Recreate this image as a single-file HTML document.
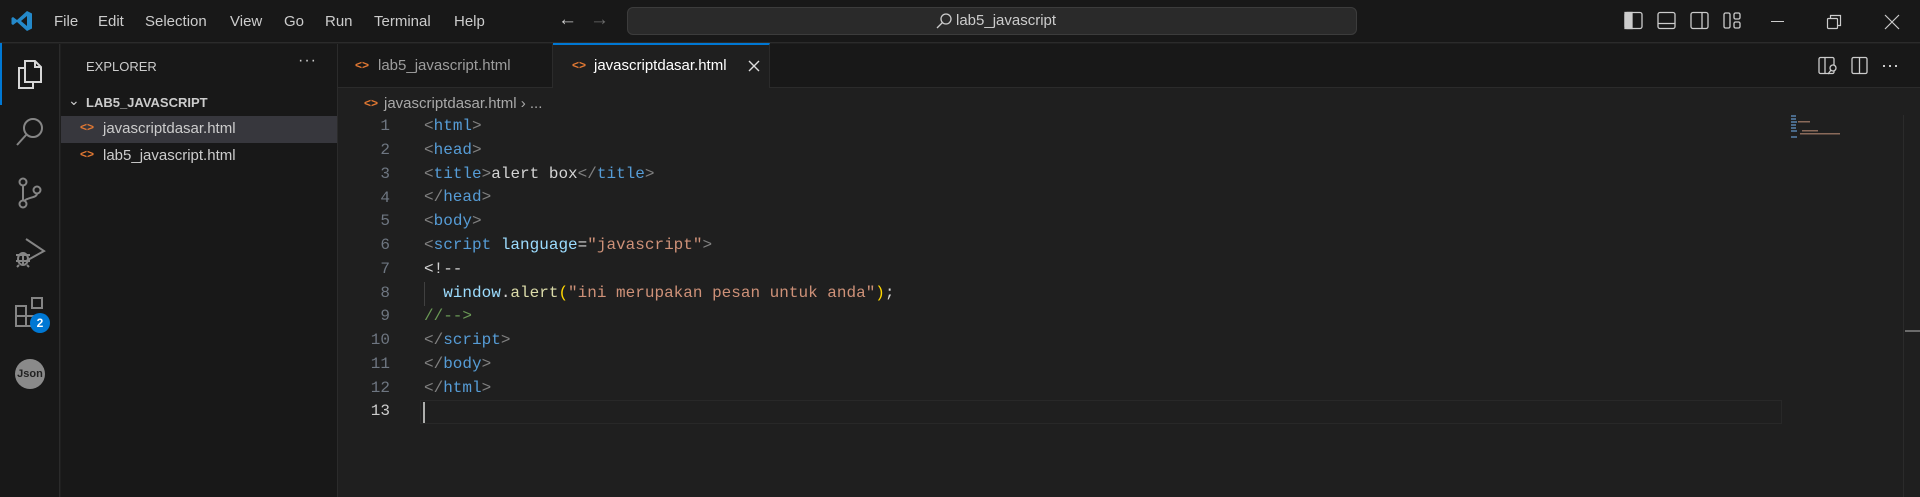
<!DOCTYPE html>
<html><head><meta charset="utf-8"><style>
*{margin:0;padding:0;box-sizing:border-box}
body{width:1920px;height:497px;background:#1f1f1f;position:relative;overflow:hidden;font-family:"Liberation Sans",sans-serif;color:#ccc}
.a{position:absolute}
.menu span{position:absolute;top:13px;font-size:15px;color:#ccc}
.code{font-family:"Liberation Mono",monospace;font-size:16px;white-space:pre;line-height:23.8px}
.t{color:#569cd6}.b{color:#808080}.at{color:#9cdcfe}.s{color:#ce9178}.c{color:#6a9955}.f{color:#dcdcaa}.y{color:#ffd700}
.ln{position:absolute;left:340px;width:50px;text-align:right;color:#6e7681}
</style></head><body>
<div class="a" style="left:0;top:0;width:1920px;height:43px;background:#181818;border-bottom:1px solid #2b2b2b"></div>
<svg class="a" style="left:10px;top:9px" width="24" height="24" viewBox="0 0 24 24"><path d="M17 2 L22 4.5 V19.5 L17 22 L7 13 L3 16 L1.5 15 V9 L3 8 L7 11 Z M17 7 L11 12 L17 17 Z" fill="#2489ca"/></svg>
<div class="menu"><span style="left:54px">File</span><span style="left:98px">Edit</span><span style="left:145px">Selection</span><span style="left:230px">View</span><span style="left:284px">Go</span><span style="left:325px">Run</span><span style="left:374px">Terminal</span><span style="left:454px">Help</span></div>
<div class="a" style="left:558px;top:9px;font-size:19px;color:#ccc">←</div>
<div class="a" style="left:590px;top:9px;font-size:19px;color:#6b6b6b">→</div>
<div class="a" style="left:627px;top:7px;width:730px;height:28px;background:#2a2a2a;border:1px solid #3c3c3c;border-radius:6px"></div>
<svg class="a" style="left:935px;top:12px" width="18" height="18"><circle cx="11" cy="7" r="5" stroke="#ccc" fill="none" stroke-width="1.3"/><path d="M7.5 10.5 L2 16" stroke="#ccc" stroke-width="1.3"/></svg>
<div class="a" style="left:956px;top:12px;font-size:15px;color:#ccc">lab5_javascript</div>
<svg class="a" style="left:1620px;top:11px" width="130" height="20" fill="none" stroke="#ccc" stroke-width="1.3">
<rect x="5" y="1.5" width="17" height="16" rx="2"/><rect x="5" y="1.5" width="7" height="16" fill="#ccc"/>
<rect x="38" y="1.5" width="17" height="16" rx="2"/><path d="M38 12.5H55"/>
<rect x="71" y="1.5" width="17" height="16" rx="2"/><path d="M82 1.5V17.5"/>
<rect x="104" y="2" width="6" height="15" rx="1.5"/><rect x="114" y="2" width="6" height="6" rx="1.5"/><rect x="114" y="11" width="6" height="6" rx="1.5"/></svg>
<div class="a" style="left:1771px;top:21px;width:13px;height:1px;background:#ccc"></div>
<svg class="a" style="left:1826px;top:14px" width="16" height="16" fill="none" stroke="#ccc" stroke-width="1.2"><rect x="1.5" y="4.5" width="10" height="10" rx="1"/><path d="M4.5 4.5V1.5H14.5V11.5H11.5"/></svg>
<svg class="a" style="left:1884px;top:14px" width="16" height="16" stroke="#ccc" stroke-width="1.2"><path d="M1 1L15 15M15 1L1 15"/></svg>
<div class="a" style="left:0;top:44px;width:60px;height:453px;background:#181818;border-right:1px solid #2b2b2b"></div>
<div class="a" style="left:0;top:43px;width:2px;height:62px;background:#0078d4"></div>
<svg class="a" style="left:14px;top:58px" width="32" height="32" fill="none" stroke="#d7d7d7" stroke-width="2"><path d="M11 3H21L27 9V24H11Z"/><path d="M21 3V9H27"/><path d="M11 10H5V30H19V24"/></svg>
<svg class="a" style="left:14px;top:116px" width="32" height="32"><circle cx="19" cy="12" r="9" stroke="#858585" stroke-width="2" fill="none"/><path d="M12.5 18.5L3 29" stroke="#858585" stroke-width="2"/></svg>
<svg class="a" style="left:14px;top:176px" width="32" height="34" fill="none" stroke="#858585" stroke-width="2"><circle cx="9" cy="6" r="3.5"/><circle cx="9" cy="28" r="3.5"/><circle cx="23" cy="14" r="3.5"/><path d="M9 9.5V24.5M23 17.5C23 22 14 21 10 25"/></svg>
<svg class="a" style="left:14px;top:236px" width="34" height="32" fill="none" stroke="#858585" stroke-width="2"><path d="M12 3L30 15L12 25"/><ellipse cx="9" cy="23" rx="5" ry="6"/><path d="M2 19H16M2 25H16M5 29L3 31M13 29L15 31M9 17V29"/></svg>
<svg class="a" style="left:14px;top:296px" width="34" height="34" fill="none" stroke="#858585" stroke-width="2"><rect x="2" y="10" width="10" height="10"/><rect x="2" y="20" width="10" height="10"/><rect x="12" y="20" width="10" height="10"/><rect x="18" y="2" width="10" height="10"/></svg>
<div class="a" style="left:30px;top:313px;width:20px;height:20px;border-radius:50%;background:#0078d4;color:#fff;font-size:12px;font-weight:bold;text-align:center;line-height:20px">2</div>
<div class="a" style="left:15px;top:359px;width:30px;height:30px;border-radius:50%;background:#8a8a8a;color:#222;font-size:11px;font-weight:bold;text-align:center;line-height:30px">Json</div>
<div class="a" style="left:61px;top:44px;width:277px;height:453px;background:#181818;border-right:1px solid #2b2b2b"></div>
<div class="a" style="left:86px;top:59px;font-size:13px;color:#ccc">EXPLORER</div>
<div class="a" style="left:298px;top:52px;font-size:16px;color:#ccc;letter-spacing:1px">···</div>
<div class="a" style="left:68px;top:92px;font-size:14px;color:#ccc">⌄</div>
<div class="a" style="left:86px;top:95px;font-size:13px;font-weight:bold;color:#ccc">LAB5_JAVASCRIPT</div>
<div class="a" style="left:61px;top:116px;width:276px;height:27px;background:#37373d"></div>
<div class="a" style="left:80px;top:120px;font-size:12px;font-weight:bold;color:#e37933">&lt;&gt;</div>
<div class="a" style="left:103px;top:120px;font-size:15px;color:#ccc">javascriptdasar.html</div>
<div class="a" style="left:80px;top:147px;font-size:12px;font-weight:bold;color:#e37933">&lt;&gt;</div>
<div class="a" style="left:103px;top:147px;font-size:15px;color:#ccc">lab5_javascript.html</div>
<div class="a" style="left:338px;top:44px;width:1582px;height:44px;background:#181818;border-bottom:1px solid #2b2b2b"></div>
<div class="a" style="left:338px;top:44px;width:215px;height:44px;border-right:1px solid #2b2b2b"></div>
<div class="a" style="left:355px;top:58px;font-size:12px;font-weight:bold;color:#e37933">&lt;&gt;</div>
<div class="a" style="left:378px;top:57px;font-size:15px;color:#9d9d9d">lab5_javascript.html</div>
<div class="a" style="left:553px;top:43px;width:217px;height:45px;background:#1f1f1f;border-top:2px solid #0078d4;border-right:1px solid #2b2b2b"></div>
<div class="a" style="left:572px;top:58px;font-size:12px;font-weight:bold;color:#e37933">&lt;&gt;</div>
<div class="a" style="left:594px;top:57px;font-size:15px;color:#fff">javascriptdasar.html</div>
<svg class="a" style="left:748px;top:60px" width="12" height="12" stroke="#ddd" stroke-width="1.4"><path d="M1 1L11 11M11 1L1 11"/></svg>
<svg class="a" style="left:1818px;top:56px" width="90" height="20" fill="none" stroke="#ccc" stroke-width="1.3"><rect x="1" y="1.5" width="15" height="16" rx="1.5"/><path d="M7 1.5V17.5"/><circle cx="15" cy="12" r="3" fill="#181818"/><path d="M13 14L10 18"/><rect x="34" y="1.5" width="15" height="16" rx="1.5"/><path d="M41.5 1.5V17.5"/><path d="M65 10h2M71 10h2M77 10h2" stroke-width="2"/></svg>
<div class="a" style="left:364px;top:96px;font-size:12px;font-weight:bold;color:#e37933">&lt;&gt;</div>
<div class="a" style="left:384px;top:95px;font-size:15px;color:#a9a9a9">javascriptdasar.html &#x203A; ...</div>
<div class="a" style="left:420px;top:400px;width:1362px;height:24px;border:1px solid #282828"></div>
<div class="a" style="left:423px;top:402px;width:2px;height:21px;background:#aeafad"></div>
<div class="a" style="left:424px;top:282px;width:1px;height:24px;background:#404040"></div>
<div class="code">
<div class="ln" style="top:115px">1</div><div class="ln" style="top:139px">2</div><div class="ln" style="top:163px">3</div><div class="ln" style="top:187px">4</div><div class="ln" style="top:210px">5</div><div class="ln" style="top:234px">6</div><div class="ln" style="top:258px">7</div><div class="ln" style="top:282px">8</div><div class="ln" style="top:305px">9</div><div class="ln" style="top:329px">10</div><div class="ln" style="top:353px">11</div><div class="ln" style="top:377px">12</div><div class="ln" style="top:400px;color:#ccc">13</div>
<div class="a" style="left:424px;top:115px;color:#d4d4d4"><span class="b">&lt;</span><span class="t">html</span><span class="b">&gt;</span>
<span class="b">&lt;</span><span class="t">head</span><span class="b">&gt;</span>
<span class="b">&lt;</span><span class="t">title</span><span class="b">&gt;</span>alert box<span class="b">&lt;/</span><span class="t">title</span><span class="b">&gt;</span>
<span class="b">&lt;/</span><span class="t">head</span><span class="b">&gt;</span>
<span class="b">&lt;</span><span class="t">body</span><span class="b">&gt;</span>
<span class="b">&lt;</span><span class="t">script</span> <span class="at">language</span>=<span class="s">"javascript"</span><span class="b">&gt;</span>
&lt;!--
  <span class="at">window</span>.<span class="f">alert</span><span class="y">(</span><span class="s">"ini merupakan pesan untuk anda"</span><span class="y">)</span>;
<span class="c">//--&gt;</span>
<span class="b">&lt;/</span><span class="t">script</span><span class="b">&gt;</span>
<span class="b">&lt;/</span><span class="t">body</span><span class="b">&gt;</span>
<span class="b">&lt;/</span><span class="t">html</span><span class="b">&gt;</span></div>
</div>
<svg class="a" style="left:1790px;top:114px" width="60" height="26"><g fill="#4a6a8a"><rect x="1" y="1" width="5" height="2"/><rect x="1" y="4" width="5" height="2"/><rect x="1" y="7" width="6" height="2"/><rect x="1" y="10" width="5" height="2"/><rect x="1" y="13" width="5" height="2"/><rect x="1" y="16" width="6" height="2"/><rect x="1" y="22" width="6" height="2"/></g><g fill="#8a6a5a"><rect x="8" y="7" width="12" height="1.5"/><rect x="12" y="16" width="16" height="1.5"/><rect x="10" y="19" width="40" height="1.5"/></g></svg>
<div class="a" style="left:1903px;top:115px;width:1px;height:382px;background:#2b2b2b"></div>
<div class="a" style="left:1905px;top:330px;width:15px;height:2px;background:#6b6b6b"></div>
</body></html>
